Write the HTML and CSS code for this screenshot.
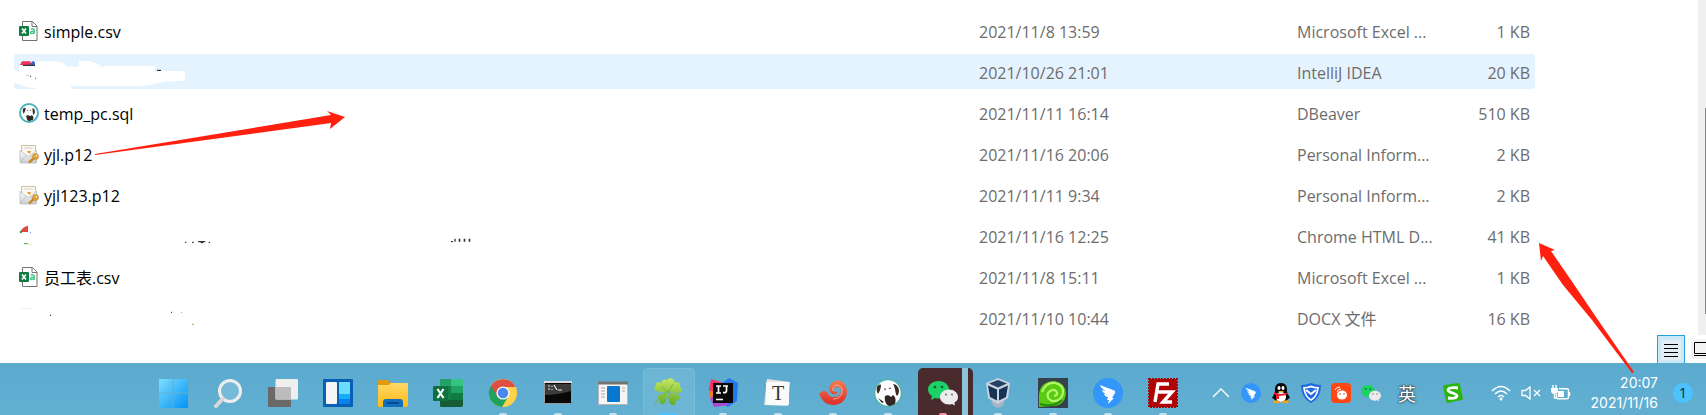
FILE: index.html
```html
<!DOCTYPE html>
<html lang="zh-CN">
<head>
    <meta charset="UTF-8">
    <meta name="viewport" content="width=device-width, initial-scale=1.0">
    <title>Files</title>
    <link rel="stylesheet" href="styles.css">
</head>
<body>
    <!-- shared icons -->
    <svg class="defs" width="0" height="0">
        <defs>
            <linearGradient id="sky" x1="0" y1="0" x2="1" y2="1">
                <stop offset="0" stop-color="#7fdcff"/><stop offset="1" stop-color="#0093f5"/>
            </linearGradient>
            <linearGradient id="yellow" x1="0" y1="0" x2="0" y2="1">
                <stop offset="0" stop-color="#ffd867"/><stop offset="1" stop-color="#fcb912"/>
            </linearGradient>
            <linearGradient id="paper" x1="0" y1="0" x2="0" y2="1">
                <stop offset="0" stop-color="#fcfcfc"/><stop offset="1" stop-color="#cfcfcf"/>
            </linearGradient>
            <linearGradient id="leaf" x1="0" y1="0" x2="0" y2="1">
                <stop offset="0" stop-color="#c8e860"/><stop offset="1" stop-color="#62ac25"/>
            </linearGradient>
            <linearGradient id="fire" x1="0" y1="0" x2="0" y2="1">
                <stop offset="0" stop-color="#f47a50"/><stop offset="1" stop-color="#dc2d28"/>
            </linearGradient>
        </defs>
        <symbol id="csv" viewBox="0 0 20 22">
            <path d="M3.500 1.500h10l4.500 4.500v14.500H3.500z" fill="#fff" stroke="#737373"/>
            <path d="M13 1.500v5h5" fill="none" stroke="#737373"/>
            <rect y="6" width="10" height="10" rx="1" fill="#107c41"/>
            <path d="M3 8.500l4 5M7 8.500l-4 5" stroke="#fff" stroke-width="1.600"/>
            <path d="M11.800 9.300c1.500-1 3.400-.6 3.400 1v3.500M15 11.200c-4-.2-4.200 2.400-2.400 2.400 1.200 0 2.200-.6 2.400-1.400" fill="none" stroke="#33c481" stroke-width="1.300"/>
        </symbol>
        <symbol id="beaver" viewBox="0 0 30 30">
            <circle cx="15" cy="15" r="13.500" fill="#fff" stroke="#4fb3ae" stroke-width="1.600"/>
            <path d="M4 9c1-2 3-3 4-2 0 3-1 6-3 9-1-2-2-4-1-7zM20 6c3 0 6 3 6 7 0 2-1 4-2 5-2-2-1-7-4-12z" fill="#3a2a26"/>
            <path d="M12 18c2-1 4-1 6 1l2-2c3 2 3 6 2 9l-5 2c-4 0-6-6-5-10z" fill="#332522"/>
            <path d="M11 10l2 1-1 1.500zM17 9l1 2h-2z" fill="#332522"/>
            <path d="M5 20l4 5 2-1z" fill="#332522"/>
        </symbol>
        <symbol id="beaver-file" viewBox="0 0 30 30">
            <circle cx="15" cy="15" r="13.500" fill="#fff" stroke="#4bb5bd" stroke-width="3"/>
            <path d="M6 9c1-2 3-2 4-2 0 3-1 6-3 9-1-2-2-4-1-7zM20 8c3 0 4 3 4 6l-2 4c-2-2-1-6-2-10z" fill="#3a2a26"/>
            <path d="M11 19c2-1 4-1 6 1l2-2c3 2 3 4 2 7l-5 2c-4 0-5-4-5-8z" fill="#332522"/>
            <path d="M12 10l2 1-1 1.500zM17 10l1 2h-2z" fill="#332522"/>
        </symbol>
        <symbol id="cert" viewBox="0 0 20 20">
            <path d="M2.500 8V1.500h14V8" fill="#fbf8f1" stroke="#cbbfae"/>
            <path d="M5 4h9" stroke="#d9cfbf"/>
            <path d="M1 6.500l8.500 6 8-6V18q0 1-1 1H2q-1 0-1-1z" fill="url(#paper)" stroke="#aaa" stroke-width=".6"/>
            <path d="M1.500 18l6-7M17 18l-6-7" stroke="#b9b9b9" stroke-width=".8"/>
            <path d="M8 7h4l-1 3-2-1z" fill="#dba63a"/>
            <path d="M15 14l-5 4.500" stroke="#c98a24" stroke-width="2.400"/>
            <circle cx="16.500" cy="12.500" r="3" fill="#dfa43e" stroke="#b97a20" stroke-width=".6"/>
            <circle cx="17.400" cy="11.700" r=".8" fill="#fff"/>
        </symbol>
        <symbol id="wechat" viewBox="0 0 30 26">
            <path d="M10.500 1C4.500 1 0 5 0 9.500c0 2.500 1.500 5 4 6.500l-1 4 4-2q14 3 14-8.500C21 5 16.500 1 10.500 1z" fill="#1cd166"/>
            <circle cx="7" cy="7" r="1.300" fill="#0a5c2c"/><circle cx="14" cy="7" r="1.300" fill="#0a5c2c"/>
            <path d="M21 9.500c-5 0-9 3.300-9 7.500s4 7.500 9 7.500q1.500 0 3-.5l3 1.500-.6-3q3.600-2 3.600-5.500c0-4.200-4-7.500-9-7.500z" fill="#ececec"/>
            <circle cx="18" cy="14.500" r="1.100" fill="#777"/><circle cx="24" cy="14.500" r="1.100" fill="#777"/>
        </symbol>
        <symbol id="ding" viewBox="0 0 30 30">
            <circle cx="15" cy="15" r="15" fill="#3296fa"/>
            <path d="M7 7l13 5q3 1 2 3l-3 5h2l-6 6 1-4h-2l1-3q-3 0-4-3l3 .2q-4-1-5-4l4 .6q-5-2-6-5.800z" fill="#fff"/>
        </symbol>
    </svg>

    <main class="explorer">
        <table class="files">
            <colgroup>
                <col>
                <col class="col-date">
                <col class="col-type">
                <col class="col-size">
            </colgroup>
            <tbody>
                <tr>
                    <td><div class="name"><svg class="file-icon"><use href="#csv"/></svg>simple.csv</div></td>
                    <td>2021/11/8 13:59</td>
                    <td>Microsoft Excel ...</td>
                    <td class="size">1 KB</td>
                </tr>
                <tr class="hover">
                    <td class="erased">
                        <svg width="500" height="35" viewBox="12 12 1500 105">
                            <path d="M12 58l15 8V47h48V35l55-2 30 7 12 10h35V33h30l28 10 10 8 10-3h150v15h90v29l-60 3-30 7-40 6H183v9H78v-3l-28-2-20-8-18-6z" fill="#fff"/>
                            <path d="M36 34h25l3 11H30z" fill="#ee3158"/>
                            <path d="M61 42l6-8h5l3 4v8H60z" fill="#3f63c8"/>
                            <path d="M39 46h36M441 61h12M60 79h3" stroke="#111" stroke-width="3"/>
                            <path d="M48 76h9" stroke="#ccc" stroke-width="3"/>
                            <path d="M75 85h3" stroke="#0a6fe0" stroke-width="3"/>
                        </svg>
                    </td>
                    <td>2021/10/26 21:01</td>
                    <td>IntelliJ IDEA</td>
                    <td class="size">20 KB</td>
                </tr>
                <tr>
                    <td><div class="name"><svg class="file-icon"><use href="#beaver-file"/></svg>temp_pc.sql</div></td>
                    <td>2021/11/11 16:14</td>
                    <td>DBeaver</td>
                    <td class="size">510 KB</td>
                </tr>
                <tr>
                    <td><div class="name"><svg class="file-icon"><use href="#cert"/></svg>yjl.p12</div></td>
                    <td>2021/11/16 20:06</td>
                    <td>Personal Inform...</td>
                    <td class="size">2 KB</td>
                </tr>
                <tr>
                    <td><div class="name"><svg class="file-icon"><use href="#cert"/></svg>yjl123.p12</div></td>
                    <td>2021/11/11 9:34</td>
                    <td>Personal Inform...</td>
                    <td class="size">2 KB</td>
                </tr>
                <tr>
                    <td class="erased">
                        <svg width="500" height="35" viewBox="42 264 1500 105">
                            <path d="M62 304q6-14 22-17v19H62z" fill="#dd4b40"/>
                            <path d="M60 303l6 5h-6z" fill="#1a9a55" stroke="#1a9a55" stroke-width="2"/>
                            <path d="M90 307h3" stroke="#4285f4" stroke-width="3"/>
                            <path d="M72 341h12" stroke="#37a868" stroke-width="3"/>
                            <path d="M84 343h11" stroke="#f7e9ae" stroke-width="3"/>
                            <path d="M555 337h4M576 337h5M594 335h22M602 338h8M626 337h4M1353 335h6" stroke="#111" stroke-width="3"/>
                            <path d="M1363 331h4M1376 331h5M1391 331h5M1406 331h5" stroke="#333" stroke-width="9"/>
                        </svg>
                    </td>
                    <td>2021/11/16 12:25</td>
                    <td>Chrome HTML D...</td>
                    <td class="size">41 KB</td>
                </tr>
                <tr>
                    <td><div class="name"><svg class="file-icon"><use href="#csv"/></svg>员工表.csv</div></td>
                    <td>2021/11/8 15:11</td>
                    <td>Microsoft Excel ...</td>
                    <td class="size">1 KB</td>
                </tr>
                <tr>
                    <td class="erased">
                        <svg width="500" height="35" viewBox="42 510 1500 105">
                            <path d="M62 541l6-6h26" fill="none" stroke="#eee" stroke-width="3"/>
                            <path d="M150 556h3M513 547h3" stroke="#111" stroke-width="3"/>
                            <path d="M543 547h3M576 583h5" stroke="#c88a30" stroke-width="3"/>
                        </svg>
                    </td>
                    <td>2021/11/10 10:44</td>
                    <td>DOCX 文件</td>
                    <td class="size">16 KB</td>
                </tr>
            </tbody>
        </table>
        <div class="side">
            <div class="scrollbar"><div class="thumb"></div></div>
            <div class="views">
                <button class="view active" aria-label="Details">
                    <svg width="20" height="20"><rect width="20" height="20" rx="2" fill="#e3eef4"/><path d="M3 4.500h14M3 8.500h14M3 12.500h14M3 16.500h14" stroke="#000"/></svg>
                </button>
                <button class="view" aria-label="Large icons">
                    <svg width="20" height="20"><rect width="20" height="20" rx="2" fill="#f3f3f3"/><path d="M3.500 3.500h14v11h-14zM3 16.500h15" fill="none" stroke="#000"/></svg>
                </button>
            </div>
        </div>
        <svg class="arrow arrow-left" width="250" height="48">
            <path d="M0 46L236 7 232 3 250 9 235 21 236 15 0 47Z" fill="#ff2010"/>
        </svg>
        <svg class="arrow arrow-right" width="96" height="132">
            <path d="M1 1L17 8 13 9 35 41 60 78 96 130 94 131 54 78 25 43 5 14 3 19Z" fill="#ff2010"/>
        </svg>
    </main>

    <footer class="taskbar">
        <nav class="apps">
            <button class="app" aria-label="Start">
                <svg width="30" height="30"><path d="M1 2q0-1 1-1h12.500v13.500H1zM15.500 1H29q1 0 1 1v12.500H15.500zM1 15.500h13.500V30H2q-1 0-1-1zM15.500 15.500H30V29q0 1-1 1H15.500z" fill="url(#sky)"/></svg>
            </button>
            <button class="app" aria-label="Search">
                <svg width="30" height="30"><circle cx="17" cy="13" r="10.500" fill="#8ec8e2" fill-opacity=".5" stroke="#ededed" stroke-width="3"/><path d="M9.500 21L3 28" stroke="#d8d8d8" stroke-width="4" stroke-linecap="round"/></svg>
            </button>
            <button class="app" aria-label="Task view">
                <svg width="30" height="30"><rect y="9" width="23" height="20" rx="1" fill="#696969"/><rect x="7.500" y="1" width="22.500" height="20.500" rx="1" fill="#efefef"/><path d="M7.500 9H23v12.500H8.500q-1 0-1-1z" fill="#bcbcbc"/></svg>
            </button>
            <button class="app" aria-label="Widgets">
                <svg width="30" height="30"><rect y="1" width="30" height="28" rx="1" fill="#0860b4"/><rect x="3" y="4" width="11" height="22" rx="1" fill="#f5f5f7"/><path d="M16 4h11v12H16z" fill="#69dcff"/><path d="M16 16h11v5H16z" fill="#15acfb"/><path d="M16 21h11v5H16z" fill="#0782ee"/></svg>
            </button>
            <button class="app" aria-label="Explorer">
                <svg width="30" height="30"><path d="M0 3q0-1 1-1h9l3 3v4H0z" fill="#e29a0c"/><path d="M0 7h11l2-2h16q1 0 1 1v21q0 2-2 2H1q-1 0-1-1z" fill="url(#yellow)"/><path d="M5 29v-5q0-3 3-3h14q3 0 3 3v5z" fill="#1070bd"/><path d="M9 25h12" stroke="#063f7c" stroke-width="1.500"/></svg>
            </button>
            <button class="app" aria-label="Excel">
                <svg width="30" height="30"><path d="M7 2q0-1 1-1h10.500v28H8q-1 0-1-1z" fill="#16814a"/><path d="M7 3q0-2 2-2h9v7H7z" fill="#21a366"/><path d="M18 1h10q2 0 2 2v5H18z" fill="#33c481"/><path d="M18 8h12v7H18z" fill="#21a366"/><path d="M18 15h12v7H18z" fill="#107c41"/><path d="M7 22h23v5q0 2-2 2H9q-2 0-2-2z" fill="#185c37"/><rect y="8" width="15" height="15" rx="1" fill="#0f7040"/><path d="M4.500 11l6 9M10.500 11l-6 9" stroke="#fff" stroke-width="2.200"/></svg>
            </button>
            <button class="app running" aria-label="Chrome">
                <svg width="30" height="30" viewBox="0 0 30 30"><circle cx="15" cy="15" r="14" fill="#ffd24c"/><path d="M15 15L3 7.500A14 14 0 0 0 14 29l6-10z" fill="#1fa25c"/><path d="M3 7.800A14 14 0 0 1 27.500 9H15l-6 9z" fill="#dd4f43"/><circle cx="15" cy="15" r="6.600" fill="#f5f5f5"/><circle cx="15" cy="15" r="5.200" fill="#4a86f0"/></svg>
            </button>
            <button class="app running" aria-label="Terminal">
                <svg width="30" height="30"><rect x="1.500" y="3.500" width="27" height="22" rx="1" fill="#080808" stroke="#9a9a9a"/><path d="M1 4h28" stroke="#ddd" stroke-width="2"/><path d="M2 6h26v7Q14 17 2 17z" fill="#3b3b3b"/><path d="M5 8h2M5 11h2M9 8v1M9 11v1M11 7l3 5M15 12h4" stroke="#eee" stroke-width="1.200"/></svg>
            </button>
            <button class="app running" aria-label="Window tool">
                <svg width="30" height="30"><rect x=".5" y="4.500" width="29" height="22" fill="#f5f5f5" stroke="#b5b5b5"/><path d="M0 5h30" stroke="#747474" stroke-width="3"/><rect x="9" y="8" width="13" height="16" rx="1" fill="#0878cf"/><path d="M3 10h4M3 13h4M3 16h4M3 19h4M24 10h3M24 13h3" stroke="#aaa"/></svg>
            </button>
            <button class="app current" aria-label="Clover">
                <svg width="30" height="30"><path d="M15 13Q7 7 9 3q2-3 5-1 3-4 7 0 3 4-6 11zM15 14Q5 15 2 12q-2-2 1-4-1-4 3-4 5 1 9 10zM16 13q3-9 8-9 4 1 3 5 4 2 1 5-4 3-12-1zM16 15q9 0 11 4 0 3-4 4 0 5-4 4-5-2-3-12zM14 15q0 10-4 11-4 0-3-4-4-1-2-4 2-3 9-3z" fill="url(#leaf)"/><path d="M15 14Q5 18 2 27M15 14l5-8M15 14l-7-6M15 14l8 8" fill="none" stroke="#7fb535"/></svg>
            </button>
            <button class="app running" aria-label="IntelliJ IDEA">
                <svg width="30" height="30"><path d="M3 1l10 3 3 12-14 3-1-8z" fill="#f6336b"/><path d="M1 12l10 4-1 12-8-7z" fill="#f47a2c"/><path d="M13 6l8-6 9 5-1 18-9 6-10-6z" fill="#2577ee"/><path d="M2 20l9-6 10 13-15 2z" fill="#a64ad1"/><path d="M5 5h20v20H5z" fill="#080808"/><path d="M8 8h5M10.500 8v7M8 15h5M15 8h5M18.500 8v5q0 2-3.500 1.500" fill="none" stroke="#fff" stroke-width="1.700"/><path d="M8 21.500h7" stroke="#fff" stroke-width="1.600"/></svg>
            </button>
            <button class="app running" aria-label="Typora">
                <svg width="30" height="30"><path d="M4 1l23 3-2 24-24-1z" fill="#e4e4e4"/><rect x="3" y="4" width="23" height="23" rx="1" fill="#fafafa"/><text class="serif-t" x="15" y="22" text-anchor="middle">T</text></svg>
            </button>
            <button class="app running" aria-label="Nautilus">
                <svg width="30" height="30"><path d="M1 16q4-5 8-2 2 5 6 5 7 0 8-5 0-5-4-5-4 1-3 4 1 2 4 0-1 5-6 3-5-4-1-10 4-5 10-3 6 3 6 11-1 12-13 13-10 1-15-11z" fill="url(#fire)"/><path d="M15 13q-1-6 5-6 5 2 4 8-2 6-9 6" fill="none" stroke="#fbb196"/></svg>
            </button>
            <button class="app running" aria-label="DBeaver">
                <svg width="30" height="30"><use href="#beaver"/></svg>
            </button>
            <button class="app alert" aria-label="WeChat">
                <svg width="30" height="26"><use href="#wechat"/></svg>
            </button>
            <button class="app running" aria-label="VirtualBox">
                <svg width="30" height="30"><path d="M8 23l7-3 7 3-2 5-5 2-5-2z" fill="#a4b4c6"/><path d="M15 0l12 5-2 15-10 6-10-6L3 5z" fill="#c9d4e0"/><path d="M15 2l9 3.500-9 4-9-4z" fill="#244264"/><path d="M5 7.500l9 4v11L7 19zM25 7.500l-9 4v11l7-3.500z" fill="#173354"/></svg>
            </button>
            <button class="app running" aria-label="Green swirl">
                <svg width="30" height="30"><path d="M0 0h30v30H0z" fill="#36414c"/><path d="M1 29V17Q2 3 17 3q10 2 11 12-1 13-14 13z" fill="#58ca12"/><path d="M4 14Q8 4 17 5q9 2 8 10-2 9-11 8-6-3-4-8 4-5 8-2 3 4-2 5" fill="none" stroke="#b5f56a" stroke-width="2.200"/><path d="M2 26q13 4 22-4" fill="none" stroke="#288c0c" stroke-width="2"/></svg>
            </button>
            <button class="app running" aria-label="DingTalk">
                <svg width="30" height="30"><use href="#ding"/></svg>
            </button>
            <button class="app running" aria-label="FileZilla">
                <svg width="30" height="30"><rect x="1" y="1" width="28" height="28" fill="#b00303" stroke="#a00808" stroke-width="2" stroke-dasharray="2 1"/><path d="M7 24L10 6h11M9 14h9M16 14h8l-9 10h9" fill="none" stroke="#fff" stroke-width="3.400"/></svg>
            </button>
        </nav>
        <div class="tray">
            <button class="tray-btn" aria-label="Show hidden icons">
                <svg width="16" height="10"><path d="M0 9l8-8 8 8" fill="none" stroke="#fff" stroke-width="1.300"/></svg>
            </button>
            <button class="tray-btn" aria-label="DingTalk"><svg width="20" height="20"><use href="#ding"/></svg></button>
            <button class="tray-btn" aria-label="QQ">
                <svg width="20" height="20"><path d="M4 9Q3 0 10 0t6 9l3 6-2 1-2 3H5l-2-3-2-1z" fill="#090909"/><ellipse cx="10" cy="14" rx="5" ry="5" fill="#fff"/><ellipse cx="8" cy="5" rx="1.500" ry="2" fill="#fff"/><ellipse cx="12" cy="5" rx="1.500" ry="2" fill="#fff"/><path d="M6.500 8h7L10 9.500z" fill="#f8b51c"/><path d="M3 9q7 4 14 0v2q-4 2-9 2v3H5v-4l-2-1z" fill="#e9202a"/><path d="M2 18q4-2 7 1v1H3zM18 18q-4-2-7 1v1h6z" fill="#f8a51c"/></svg>
            </button>
            <button class="tray-btn" aria-label="Security">
                <svg width="20" height="20"><path d="M10 0q5 2 10 2 0 13-10 18Q0 15 0 2q5 0 10-2z" fill="#2068e4"/><path d="M10 2.500q4 1.500 8 1.500-1 10-8 14Q3 14 2 4q4 0 8-1.500z" fill="#fff"/><path d="M10 4.500q3 1 6 1-1 8-6 10.500-5-2.500-6-10.500 3 0 6-1z" fill="#2068e4"/><path d="M5 7l5 4 5-4" fill="none" stroke="#fff" stroke-width="2"/></svg>
            </button>
            <button class="tray-btn" aria-label="Assistant">
                <svg width="20" height="20"><rect width="20" height="20" rx="4" fill="#ff4713"/><ellipse cx="11" cy="12" rx="5" ry="4.500" fill="#fff"/><circle cx="9" cy="11" r=".8" fill="#ff4713"/><circle cx="13" cy="11" r=".8" fill="#ff4713"/><path d="M4 7q1-3 5-3M6 9q1-3 4-3" fill="none" stroke="#fff"/></svg>
            </button>
            <button class="tray-btn" aria-label="WeChat"><svg width="20" height="18"><use href="#wechat"/></svg></button>
            <button class="tray-btn lang">英</button>
            <button class="tray-btn sogou" aria-label="Sogou">
                <svg width="20" height="20"><path d="M0 4Q0 2 2 2l13-2q2 0 2 2l3 13q0 2-2 2L5 20q-2 0-2-2z" fill="#2cb50c"/><path d="M15 5Q6 4 5 7c0 3 9 3 9 6q-1 3-9 2" fill="none" stroke="#fff" stroke-width="2.800"/></svg>
            </button>
            <button class="tray-btn" aria-label="Wi-Fi">
                <svg width="20" height="16"><path d="M1 6q9-9 18 0M4 9q6-6 12 0M7 12q3-3 6 0" fill="none" stroke="#fff" stroke-width="1.500"/><circle cx="10" cy="14" r="1.500" fill="#fff"/></svg>
            </button>
            <button class="tray-btn" aria-label="Muted">
                <svg width="20" height="14"><path d="M1 4.500h3.500L9 1v12L4.500 9.500H1z" fill="none" stroke="#fff" stroke-width="1.300"/><path d="M13 4l6 6M19 4l-6 6" stroke="#fff" stroke-width="1.300"/></svg>
            </button>
            <button class="tray-btn" aria-label="Battery">
                <svg width="20" height="16"><path d="M8 3.700h8q1.500 0 1.500 1.500v7q0 1.500-1.500 1.500H7q-1.500 0-1.500-1.500V9M18.500 7v4" fill="none" stroke="#fff" stroke-width="1.400"/><path d="M7 6h6v6H7zM0 3h7v4q-1 2-3.500 2T0 7z" fill="#fff"/><path d="M2 0v3M5 0v3M3.500 8v5h2" fill="none" stroke="#fff" stroke-width="1.400"/></svg>
            </button>
            <div class="clock">
                <time>20:07</time>
                <time>2021/11/16</time>
            </div>
            <button class="badge">1</button>
        </div>
    </footer>
</body>
</html>
```

FILE: styles.css
```css
*{
    box-sizing: border-box;
}
body{
    margin: 0;
    background: white;
    font-family: "Open Sans", "Noto Sans CJK SC", sans-serif;
    font-size: 16px;
    color: #000;
    overflow-x: hidden;
}
button{
    padding: 0;
    border: 0;
    background: none;
    font-family: inherit;
    color: inherit;
}
svg{
    display: block;
}
.defs{
    position: absolute;
}

/* file list */
.explorer{
    position: relative;
    display: flex;
}
.files{
    flex: 1;
    margin: 7px 0 22px 14px;
    table-layout: fixed;
    border-spacing: 0 6px;
}
.col-date{
    width: 318px;
}
.col-type{
    width: 148px;
}
.col-size{
    width: 90px;
}
.files td{
    height: 35px;
    padding: 2px 0 0;
    line-height: 24px;
    white-space: nowrap;
    color: #6d6d6d;
}
.files .erased{
    padding: 0;
}
.files .size{
    padding-right: 5px;
    text-align: right;
}
.name{
    display: flex;
    align-items: flex-start;
    gap: 5px;
    padding-left: 5px;
    color: #000;
}
.file-icon{
    width: 20px;
    height: 22px;
}
.hover td{
    background: #e5f3fe;
}
.hover td:first-child{
    border-radius: 3px 0 0 3px;
}
.hover td:last-child{
    border-radius: 0 3px 3px 0;
}

/* scrollbar and view switch */
.side{
    display: flex;
    flex-direction: column;
    width: 171px;
}
.scrollbar{
    flex: 1;
    align-self: flex-end;
    width: 8px;
    padding: 108px 0 0 7px;
    background: #f0f0f0;
}
.thumb{
    height: 206px;
    background: #858585;
}
.views{
    display: flex;
    gap: 2px;
    overflow: hidden;
    margin-left: 122px;
}
.view{
    display: flex;
    flex: none;
    align-items: center;
    justify-content: center;
    width: 28px;
    height: 28px;
}
.view.active{
    border: 1px solid #26a0da;
    border-bottom: 0;
    background: #cbe8f6;
}

/* red pointers drawn over the list */
.arrow{
    position: absolute;
    z-index: 1;
    pointer-events: none;
}
.arrow-left{
    top: 108px;
    left: 95px;
}
.arrow-right{
    top: 242px;
    right: 72px;
}

/* taskbar */
.taskbar{
    display: flex;
    justify-content: space-between;
    height: 52px;
    background: linear-gradient(#5babcf, #62afd1);
    color: white;
}
.apps{
    display: flex;
    padding-left: 145px;
}
.app{
    position: relative;
    display: flex;
    align-items: center;
    justify-content: center;
    width: 55px;
    padding-top: 8px;
}
.app svg{
    position: relative;
}
.app::after{
    content: "";
    position: absolute;
    bottom: 0;
    left: 24px;
    width: 8px;
    height: 2px;
    border-radius: 2px 2px 0 0;
}
.running::after{
    background: #c6e0ec;
}
.current::before,
.alert::before{
    content: "";
    position: absolute;
    top: 5px;
    bottom: 0;
    left: 3px;
    width: 50px;
    border-radius: 5px 5px 0 0;
}
.current::before{
    border: 1px solid #7bbbd8;
    border-bottom: 0;
    background: #6cb5d5;
}
.current::after{
    left: 18px;
    width: 20px;
    background: #4cc2ff;
}
.alert::before{
    border-right: 5px solid #492a2d;
    background: linear-gradient(to right, #492a2d 44px, #8fc3d9 44px, #8fc3d9 45px);
}
.alert::after{
    background: #ff8c9c;
}
.serif-t{
    font-family: "Liberation Serif", serif;
    font-size: 20px;
    fill: #333;
}
.tray{
    display: flex;
    align-items: center;
    padding: 8px 13px 0 0;
}
.tray-btn{
    display: flex;
    align-items: center;
    justify-content: center;
    width: 30px;
    height: 44px;
}
.lang{
    width: 42px;
    font-size: 18px;
    text-shadow: 0 0 2px #222, 0 0 2px #222;
}
.sogou{
    width: 50px;
    margin-right: 8px;
}
.clock{
    display: flex;
    flex-direction: column;
    width: 82px;
    margin-right: 15px;
    font-family: Inter, sans-serif;
    font-size: 14px;
    line-height: 20px;
    text-align: right;
}
.badge{
    width: 20px;
    height: 20px;
    border-radius: 50%;
    background: #4cc2ff;
    color: #16232b;
    font-size: 14px;
    line-height: 20px;
}
```
